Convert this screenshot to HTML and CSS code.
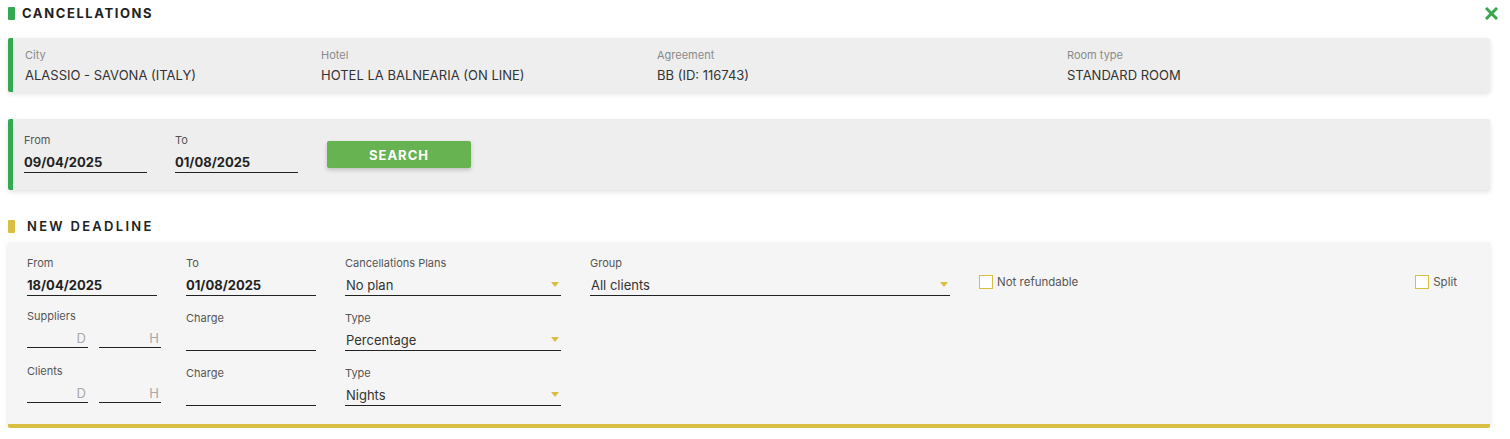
FILE: index.html
```html
<!DOCTYPE html>
<html>
<head>
    <meta charset="utf-8">
    <title> Cancellations </title>

    <!-- Styling -->
    <link rel="stylesheet" href="styles.css">
</head>
<body>
    <div class="page">

        <!-- Header -->
        <div class="title_row">
            <h1 class="title"><span class="mark green"></span>CANCELLATIONS</h1>
            <button class="close" title="Close">
                <svg width="13" height="13" viewBox="0 0 13 13">
                    <path d="M2 2 L11 11 M11 2 L2 11" stroke="#3aa74f" stroke-width="3" stroke-linecap="square"/>
                </svg>
            </button>
        </div>

        <!-- Summary of the selected product -->
        <div class="card card_info">
            <div class="info">
                <span class="info_label">City</span>
                <span class="info_value">ALASSIO - SAVONA (ITALY)</span>
            </div>
            <div class="info">
                <span class="info_label">Hotel</span>
                <span class="info_value">HOTEL LA BALNEARIA (ON LINE)</span>
            </div>
            <div class="info">
                <span class="info_label">Agreement</span>
                <span class="info_value">BB (ID: 116743)</span>
            </div>
            <div class="info">
                <span class="info_label">Room type</span>
                <span class="info_value">STANDARD ROOM</span>
            </div>
        </div>

        <!-- Search -->
        <div class="card card_search">
            <div class="field date">
                <label>From</label>
                <div class="input bold">09/04/2025</div>
            </div>
            <div class="field date">
                <label>To</label>
                <div class="input bold">01/08/2025</div>
            </div>
            <button class="search_btn">SEARCH</button>
        </div>

        <!-- New deadline -->
        <h2 class="title subtitle"><span class="mark yellow"></span>NEW DEADLINE</h2>

        <div class="card card_deadline">
            <div class="deadline_grid">
                <div class="field">
                    <label>From</label>
                    <div class="input bold">18/04/2025</div>
                </div>
                <div class="field">
                    <label>To</label>
                    <div class="input bold">01/08/2025</div>
                </div>
                <div class="field">
                    <label>Cancellations Plans</label>
                    <div class="input select">No plan<span class="arrow"></span></div>
                </div>
                <div class="field">
                    <label>Group</label>
                    <div class="input select">All clients<span class="arrow"></span></div>
                </div>
                <div class="check_cell">
                    <span class="check"><span class="box"></span>Not refundable</span>
                    <span class="check"><span class="box"></span>Split</span>
                </div>

                <div class="field dh">
                    <label>Suppliers</label>
                    <div class="dh_inputs">
                        <div class="input hint">D</div>
                        <div class="input hint">H</div>
                    </div>
                </div>
                <div class="field low">
                    <label>Charge</label>
                    <div class="input"></div>
                </div>
                <div class="field low">
                    <label>Type</label>
                    <div class="input select">Percentage<span class="arrow"></span></div>
                </div>
                <div></div>
                <div></div>

                <div class="field dh">
                    <label>Clients</label>
                    <div class="dh_inputs">
                        <div class="input hint">D</div>
                        <div class="input hint">H</div>
                    </div>
                </div>
                <div class="field low">
                    <label>Charge</label>
                    <div class="input"></div>
                </div>
                <div class="field low">
                    <label>Type</label>
                    <div class="input select">Nights<span class="arrow"></span></div>
                </div>
            </div>
        </div>

    </div>
</body>
</html>
```

FILE: styles.css
```css
* {
    box-sizing: border-box;
    font-family: Inter, "Open Sans", sans-serif;
}

:root {
    --green:      #34a853;
    --btn-green:  #67b251;
    --yellow:     #d8be42;
    --ink:        #222222;
    --text:       #333333;
    --label:      #555555;
    --soft-label: #8a8a8a;
    --hint:       #a8a8a8;
    --card:       #eeeeee;
    --card-light: #f5f5f5;
}

body {
    margin: 0;
    background-color: #ffffff;
    color: var( --text );
}

.page {
    width: 1510px;
    padding: 0 8px;
}

/* titles */

.title_row {
    display: flex;
    align-items: center;
    justify-content: space-between;
    height: 26px;
}

.title {
    display: flex;
    align-items: center;
    margin: 0;

    font-size: 13px;
    font-weight: 700;
    letter-spacing: 1.6px;
    color: var( --ink );
}

.mark {
    display: inline-block;
    width: 7px;
    height: 13px;
    margin-right: 7px;
    border-radius: 1px;
}

.green  { background-color: var( --green ); }
.yellow { background-color: var( --yellow ); }

.subtitle {
    height: 26px;
    margin-top: 23px;
    font-weight: 600;
    letter-spacing: 2.3px;
}

.subtitle .mark {
    margin-right: 12px;
}

.close {
    border: none;
    background: none;
    padding: 0;
    margin-right: 4px;
    height: 13px;
    cursor: pointer;
}

/* cards */

.card {
    width: 1482px;
    border-radius: 2px;
    box-shadow: 0 2px 5px rgba( 0, 0, 0, 0.12 );
}

.card_info {
    display: grid;
    grid-template-columns: 296px 336px 410px 1fr;
    margin-top: 12px;
    padding: 10px 12px 8px 12px;
    background-color: var( --card );
    border-left: 5px solid var( --green );
}

.info {
    display: flex;
    flex-direction: column;
}

.info_label {
    height: 14px;
    line-height: 14px;
    font-size: 11px;
    color: var( --soft-label );
}

.info_value {
    margin-top: 4px;
    line-height: 18px;
    font-size: 13px;
    color: var( --text );
}

.card_search {
    display: flex;
    align-items: flex-start;
    gap: 28px;
    margin-top: 27px;
    padding: 14px 12px 17px 11px;
    background-color: var( --card );
    border-left: 5px solid var( --green );
}

.card_search .date {
    width: 123px;
}

.search_btn {
    width: 144px;
    height: 27px;
    margin-top: 8px;
    margin-left: 1px;

    border: none;
    border-radius: 2px;
    background-color: var( --btn-green );
    box-shadow: 0 2px 4px rgba( 0, 0, 0, 0.2 );

    color: #ffffff;
    font-size: 13px;
    font-weight: 700;
    letter-spacing: 1px;
}

.card_deadline {
    margin-top: 3px;
    padding: 14px 19px 18px 19px;
    background-color: var( --card-light );
    border-bottom: 4px solid var( --yellow );
}

.deadline_grid {
    display: grid;
    grid-template-columns: 130px 130px 216px 360px 1fr;
    column-gap: 29px;
    row-gap: 13px;
}

/* fields */

.field {
    display: flex;
    flex-direction: column;
}

.field label {
    height: 14px;
    line-height: 14px;
    font-size: 11px;
    color: var( --label );
}

.field.low label {
    margin-top: 2px;
}

.input {
    position: relative;
    height: 26px;
    padding-top: 4px;
    line-height: 22px;
    font-size: 13px;
    color: var( --text );
    border-bottom: 1px solid var( --ink );
}

.bold {
    font-weight: 700;
    color: var( --ink );
}

.select {
    padding-left: 1px;
}

.arrow {
    position: absolute;
    right: 2px;
    top: 12px;
    width: 0;
    height: 0;
    border-left: 4px solid transparent;
    border-right: 4px solid transparent;
    border-top: 5px solid var( --yellow );
}

.dh_inputs {
    display: flex;
    gap: 11px;
}

.dh_inputs .input {
    flex-shrink: 0;
    width: 61px;
    height: 25px;
    padding-right: 2px;
    text-align: right;
    color: var( --hint );
}

.dh_inputs .input:last-child {
    width: 62px;
}

.check_cell {
    display: flex;
    justify-content: space-between;
    align-items: center;
    padding-top: 12px;
    padding-right: 14px;
}

.check {
    display: flex;
    align-items: center;
    font-size: 11.5px;
    color: var( --label );
}

.box {
    display: inline-block;
    width: 14px;
    height: 14px;
    margin-right: 4px;
    background-color: #ffffff;
    border: 1.5px solid var( --yellow );
}
```
